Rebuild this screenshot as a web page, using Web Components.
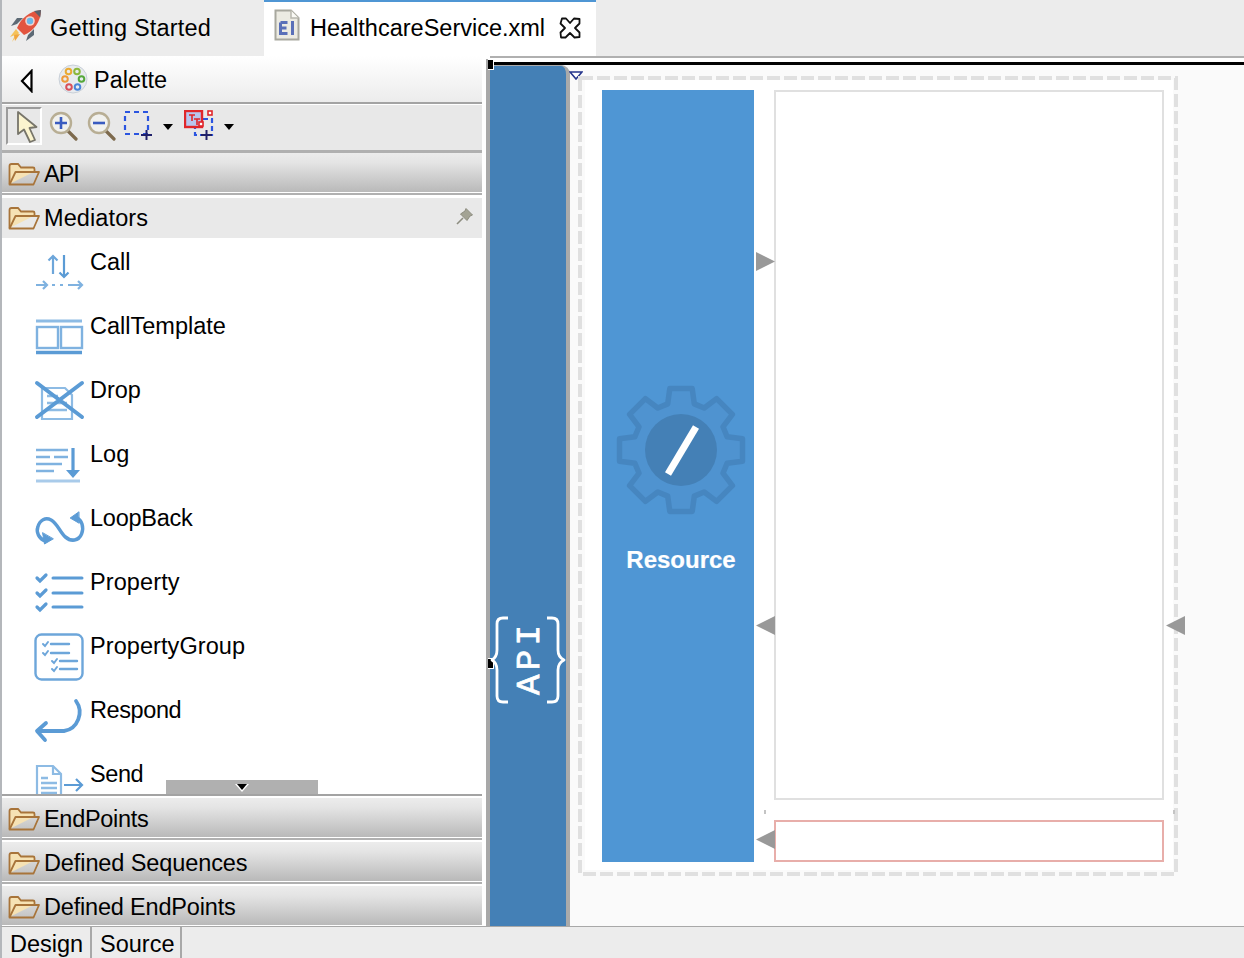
<!doctype html>
<html>
<head>
<meta charset="utf-8">
<title>HealthcareService.xml</title>
<style>
  html, body { margin: 0; padding: 0; background: #ececec; }
  body { font-family: "Liberation Sans", Arial, sans-serif; font-size: 23.5px; color: #000; }
  svg { display: block; overflow: visible; }
</style>
</head>
<body>

<svg width="0" height="0" style="position:absolute">
  <defs>
    <linearGradient id="folderFill" x1="0" y1="0" x2="0" y2="1">
      <stop offset="0" stop-color="#fbe9bd"/>
      <stop offset="1" stop-color="#eec883"/>
    </linearGradient>
  </defs>
</svg>

<ide-window>
  <editor-tabs>
    <editor-tab>
      <svg slot="icon" width="34" height="34" viewBox="0 0 34 34">
        <path d="M10 24 L3 33 L6 26 L1 28 L7 20 Z" fill="#f5c25b"/>
        <path d="M11 25 L6 32 L5 26 Z" fill="#f0a640"/>
        <path d="M8 15 L2 17 L8 9 L14 9 Z" fill="#5d6a75"/>
        <path d="M19 26 L17 32 L25 26 L25 20 Z" fill="#5d6a75"/>
        <path d="M8 19 C12 9 21 2 32 1 C32 12 25 22 15 26 Z" fill="#e2553f"/>
        <path d="M25 2 L32 1 L31.3 8.5 Z" fill="#59626c"/>
        <circle cx="21" cy="12" r="4.8" fill="#f4d3cb"/>
        <circle cx="21" cy="12" r="3.2" fill="#6cb8e8"/>
      </svg>
      Getting Started
    </editor-tab>
    <editor-tab active closable>
      <svg slot="icon" width="26" height="32" viewBox="0 0 26 32">
        <path d="M1.5 1.5 H17 L24.5 9 V30.5 H1.5 Z" fill="#ecebe2" stroke="#a8a89e" stroke-width="2"/>
        <path d="M17 1.5 V9 H24.5" fill="#fafaf5" stroke="#b8b8ae" stroke-width="1.5"/>
        <path d="M6.5 13.5 H13.5 M6.5 13.5 V24.5 H13.5 M6.5 19 H12.5" fill="none" stroke="#5a70b8" stroke-width="3"/>
        <path d="M18.5 12 V26" fill="none" stroke="#5a70b8" stroke-width="3"/>
      </svg>
      HealthcareService.xml
    </editor-tab>
  </editor-tabs>

  <ide-workspace>
    <palette-panel>
      <palette-header>Palette</palette-header>
      <palette-tools></palette-tools>
      <palette-drawer gradient wide style="letter-spacing:-1px">API</palette-drawer>
      <palette-drawer open pinned style="letter-spacing:.1px">Mediators</palette-drawer>
      <mediator-list>
        <mediator-item>
          <svg slot="icon" width="52" height="46" viewBox="0 0 52 46" fill="none" stroke="#6da6da" stroke-width="2.2">
            <path d="M21 26 V8 M16.5 12.5 L21 8 L25.5 12.5"/>
            <path d="M32 7 V29 M27.5 24.5 L32 29 L36.5 24.5" stroke="#5b9bd5"/>
            <path d="M4 37 H15 M11 33 L15 37 L11 41 M20 37 H23 M28 37 H31 M36 37 H50 M46 33 L50 37 L46 41" stroke="#7fb2e0"/>
          </svg>
          Call
        </mediator-item>
        <mediator-item>
          <svg slot="icon" width="52" height="46" viewBox="0 0 52 46" fill="none">
            <path d="M4 9 H50" stroke="#8dbbe4" stroke-width="3"/>
            <rect x="5" y="15" width="21" height="21" stroke="#7fb2e0" stroke-width="2.4"/>
            <rect x="29" y="15" width="21" height="21" stroke="#7fb2e0" stroke-width="2.4"/>
            <path d="M4 40.5 H50" stroke="#5b9bd5" stroke-width="3.4"/>
          </svg>
          CallTemplate
        </mediator-item>
        <mediator-item>
          <svg slot="icon" width="52" height="46" viewBox="0 0 52 46" fill="none">
            <path d="M10 12 H33 L40 19 V43 H10 Z" stroke="#8dbbe4" stroke-width="2.2"/>
            <path d="M15 20 H26 M15 27 H35 M15 34 H35" stroke="#8dbbe4" stroke-width="2.4"/>
            <path d="M5 7 L50 41 M50 7 L5 41" stroke="#5b9bd5" stroke-width="4" stroke-linecap="round"/>
          </svg>
          Drop
        </mediator-item>
        <mediator-item>
          <svg slot="icon" width="52" height="46" viewBox="0 0 52 46" fill="none">
            <path d="M4 10 H36 M4 17 H18 M22 17 H36 M4 24 H30 M4 31 H22" stroke="#7fb2e0" stroke-width="2.4"/>
            <path d="M4 41 H48" stroke="#a9cbea" stroke-width="3"/>
            <path d="M41 8 V36" stroke="#5b9bd5" stroke-width="3.2"/>
            <path d="M34 30 L41 38 L48 30 Z" fill="#5b9bd5"/>
          </svg>
          Log
        </mediator-item>
        <mediator-item style="letter-spacing:-.25px">
          <svg slot="icon" width="52" height="46" viewBox="0 0 52 46" fill="none" stroke="#5b9bd5" stroke-width="3.6" stroke-linecap="round" stroke-linejoin="round">
            <g transform="translate(3 0) scale(.95 1)">
              <path d="M11 37 C4 35 1 28 3 23 C5 16 11 13 17 16 C24 20 26 28 32 33 C38 38 46 37 49 30 C52 23 49 16 44 14"/>
              <path d="M46 8 L37 14 L46 19 Z" fill="#5b9bd5" stroke-width="1"/>
              <path d="M8 29 L10 40 L19 35 Z" fill="#5b9bd5" stroke-width="1"/>
            </g>
          </svg>
          LoopBack
        </mediator-item>
        <mediator-item style="letter-spacing:.1px">
          <svg slot="icon" width="52" height="46" viewBox="0 0 52 46" fill="none" stroke="#5b9bd5" stroke-linecap="round">
            <path d="M5 10 L8 13 L14 7 M5 25 L8 28 L14 22 M5 39 L8 42 L14 36" stroke-width="3.2"/>
            <path d="M21 10 H50 M21 25 H50 M21 39 H50" stroke-width="3"/>
          </svg>
          Property
        </mediator-item>
        <mediator-item style="letter-spacing:.08px">
          <svg slot="icon" width="52" height="50" viewBox="0 0 52 50" fill="none" stroke="#6da6da" stroke-linecap="round">
            <rect x="3.5" y="2.5" width="47" height="45" rx="6" stroke-width="2.4"/>
            <path d="M11 12 L13 14 L16 10 M11 21 L13 23 L16 19 M20 29 L22 31 L25 27 M20 37 L22 39 L25 35" stroke-width="2"/>
            <path d="M19 12 H37 M19 21 H37 M28 29 H45 M28 37 H45" stroke-width="2.4"/>
          </svg>
          PropertyGroup
        </mediator-item>
        <mediator-item style="letter-spacing:-.4px">
          <svg slot="icon" width="52" height="46" viewBox="0 0 52 46" fill="none" stroke="#5b9bd5" stroke-width="3.8" stroke-linecap="round" stroke-linejoin="round">
            <path d="M44 5 C52 16 46 33 32 35 H8"/>
            <path d="M14 27 L5 35 L13 44"/>
          </svg>
          Respond
        </mediator-item>
        <mediator-item style="letter-spacing:-.4px">
          <svg slot="icon" width="52" height="46" viewBox="0 0 52 46" fill="none" stroke="#8dbbe4" stroke-width="2.2">
            <path d="M5 6 H21 L29 14 V42 H5 Z"/>
            <path d="M21 6 V14 H29"/>
            <path d="M9 18 H16 M9 23 H25 M9 28 H25 M9 33 H25" stroke-width="2.4"/>
            <path d="M32 25 H50 M44 19 L50 25 L44 31" stroke="#5b9bd5"/>
          </svg>
          Send
        </mediator-item>
      </mediator-list>
      <palette-drawer gradient spaced style="letter-spacing:-.3px">EndPoints</palette-drawer>
      <palette-drawer gradient style="letter-spacing:-.1px">Defined Sequences</palette-drawer>
      <palette-drawer gradient last style="letter-spacing:-.18px">Defined EndPoints</palette-drawer>
    </palette-panel>
    <design-canvas></design-canvas>
  </ide-workspace>

  <page-tabs></page-tabs>
</ide-window>

<script>
  const folderIcon = `
    <svg width="32" height="24" viewBox="0 0 32 24" style="display:block;flex:none">
      <path d="M1.5 22 V4 Q1.5 2 3.5 2 H10 L13 5.5 H25 Q26.5 5.5 26.5 7 V9.5" fill="#f6e2b4" stroke="#a8743a" stroke-width="1.8"/>
      <path d="M1.5 22.5 L7.5 10 H31 L25.5 22.5 Z" fill="url(#folderFill)" stroke="#a8743a" stroke-width="1.8" stroke-linejoin="round"/>
    </svg>`;

  class IdeWindow extends HTMLElement {
    constructor() {
      super();
      this.attachShadow({ mode: "open" }).innerHTML = `
        <style>
          :host { display: flex; flex-direction: column; width: 1244px; height: 958px; overflow: hidden; }
        </style>
        <slot></slot>`;
    }
  }

  class EditorTabs extends HTMLElement {
    constructor() {
      super();
      this.attachShadow({ mode: "open" }).innerHTML = `
        <style>
          :host { display: flex; height: 56px; flex: none; background: #ececec; border-left: 2px solid #b4b7bb; box-sizing: border-box; }
        </style>
        <slot></slot>`;
    }
  }

  class EditorTab extends HTMLElement {
    constructor() {
      super();
      const active = this.hasAttribute("active");
      this.attachShadow({ mode: "open" }).innerHTML = `
        <style>
          :host { display: flex; align-items: center; box-sizing: border-box; height: 56px;
                  width: ${active ? 332 : 262}px; padding-left: ${active ? 10 : 7}px; padding-bottom: ${active ? 2 : 1}px;
                  background: ${active ? "#fff" : "#ececec"};
                  border-top: 2px solid ${active ? "#4f96d4" : "#ececec"};
                  letter-spacing: ${active ? 0 : 0.2}px; }
          .icon { width: ${active ? 36 : 41}px; flex: none; margin-bottom: 6px; }
          .close { margin-left: 14px; display: block; }
        </style>
        <span class="icon"><slot name="icon"></slot></span>
        <slot></slot>
        ${this.hasAttribute("closable") ? `
          <svg class="close" width="22" height="22" viewBox="0 0 22 22">
            <path d="M3 1.5 L7 1.5 L11 6 L15 1.5 L20.5 2 L20.5 6.5 L16 11 L20.5 15.5 L20.5 20 L15.5 20.5 L11 16 L6.5 20.5 L2 20.5 L1.5 15.5 L6 11 L1.5 6.5 Z"
                  fill="#fff" stroke="#111" stroke-width="1.8" stroke-linejoin="round"/>
          </svg>` : ""}`;
    }
  }

  class IdeWorkspace extends HTMLElement {
    constructor() {
      super();
      this.attachShadow({ mode: "open" }).innerHTML = `
        <style>
          :host { display: flex; flex: none; height: 870px; background: #fff; }
        </style>
        <slot></slot>`;
    }
  }

  class PalettePanel extends HTMLElement {
    constructor() {
      super();
      this.attachShadow({ mode: "open" }).innerHTML = `
        <style>
          :host { display: flex; flex-direction: column; flex: none; width: 482px; box-sizing: border-box;
                  border-left: 2px solid #b4b7bb; background: #fff; }
        </style>
        <slot></slot>`;
    }
  }

  class PaletteHeader extends HTMLElement {
    constructor() {
      super();
      this.attachShadow({ mode: "open" }).innerHTML = `
        <style>
          :host { display: flex; align-items: center; flex: none; box-sizing: border-box; height: 48px;
                  padding: 3px 0 0 18px; background: linear-gradient(#fff, #ececec); border-bottom: 2px solid #a3a3a3; }
          svg { display: block; flex: none; }
          .label { margin-left: 6px; }
          .back { margin-right: 24px; }
          .wheel { margin-top: -3px; }
        </style>
        <svg class="back" width="14" height="24" viewBox="0 0 14 24">
          <path d="M11.5 2 L2 12 L11.5 22 Z" fill="#fff" stroke="#000" stroke-width="2.2"/>
        </svg>
        <svg class="wheel" width="30" height="30" viewBox="0 0 30 30">
          <circle cx="15" cy="15" r="14" fill="#e8ebef" stroke="#c9d0d8"/>
          <circle cx="10.5" cy="7.5" r="2.8" fill="none" stroke="#eaaa33" stroke-width="2"/>
          <circle cx="19" cy="7.5" r="2.8" fill="none" stroke="#8cb83c" stroke-width="2"/>
          <circle cx="7" cy="15" r="2.8" fill="none" stroke="#ee9a3a" stroke-width="2"/>
          <circle cx="23.5" cy="15" r="2.8" fill="none" stroke="#55a83a" stroke-width="2"/>
          <circle cx="11" cy="23" r="2.8" fill="none" stroke="#d8505a" stroke-width="2"/>
          <circle cx="19.5" cy="23" r="2.8" fill="none" stroke="#4a86d8" stroke-width="2"/>
        </svg>
        <span class="label"><slot></slot></span>`;
    }
  }

  class PaletteTools extends HTMLElement {
    constructor() {
      super();
      const lens = (sign) => `
        <svg class="tool" width="30" height="30" viewBox="0 0 30 30">
          <path d="M17 18 L27 28" stroke="#7d6a4d" stroke-width="3.2" stroke-linecap="round"/>
          <circle cx="12" cy="12" r="10" fill="#f1f1ee" stroke="#b8ae94" stroke-width="2.4"/>
          <path d="${sign}" stroke="#3a5cc0" stroke-width="2.6"/>
        </svg>`;
      const caret = `<svg class="caret" width="10" height="6" viewBox="0 0 10 6"><path d="M0 0 H10 L5 6 Z" fill="#000"/></svg>`;
      this.attachShadow({ mode: "open" }).innerHTML = `
        <style>
          :host { display: flex; align-items: center; flex: none; box-sizing: border-box; height: 48px;
                  margin-top: 1px; padding: 0 0 3px 4px; background: #e8e8e8; border-bottom: 3px solid #b0b0b0; }
          svg { display: block; }
          .picked { box-sizing: border-box; width: 36px; height: 38px; padding: 2px 0 0 9px;
                    border: 2px solid; border-color: #9c9c9c #fff #fff #9c9c9c; }
          .tool { flex: none; }
          .zoom-in { margin-left: 7px; }
          .zoom-out { margin-left: 8px; }
          .marquee { margin-left: 6px; margin-top: -2px; }
          .caret { margin-left: 10px; margin-top: 1px; flex: none; }
          .note { margin-left: 11px; margin-top: -2px; }
          .caret.second { margin-left: 8px; }
        </style>
        <div class="picked">
          <svg width="22" height="32" viewBox="0 0 22 32">
            <path d="M1 1 L1 23 L7 18.5 L13 31 L18 29 L12.5 17 L19.5 16 Z" fill="#fbf4cf" stroke="#77756a" stroke-width="1.8" stroke-linejoin="round"/>
          </svg>
        </div>
        <span class="zoom-in">${lens("M6 12 H18 M12 6 V18")}</span>
        <span class="zoom-out">${lens("M6 12 H18")}</span>
        <svg class="marquee tool" width="30" height="30" viewBox="0 0 30 30">
          <rect x="2" y="2" width="23" height="22" fill="none" stroke="#2b55e0" stroke-width="2.2" stroke-dasharray="5 4"/>
          <path d="M18 25 H29 M23.5 20 V30" stroke="#20206a" stroke-width="2"/>
        </svg>
        ${caret}
        <svg class="note tool" width="32" height="30" viewBox="0 0 32 30">
          <rect x="11" y="9" width="17" height="16" fill="none" stroke="#2b55e0" stroke-width="2.2" stroke-dasharray="5 3"/>
          <rect x="1" y="1" width="17" height="16" fill="#b9c6ee" stroke="#e0262a" stroke-width="2.4"/>
          <path d="M5 5 H11 M8 5 V11 M10 9 H16 M13 9 V15" stroke="#e0262a" stroke-width="1.6"/>
          <rect x="24" y="1" width="4" height="4" fill="#fff" stroke="#e0262a" stroke-width="1.6"/>
          <rect x="15" y="12" width="4" height="4" fill="#fff" stroke="#e0262a" stroke-width="1.6"/>
          <path d="M17 25 H28 M22.5 20 V30" stroke="#20206a" stroke-width="2"/>
        </svg>
        <svg class="caret second" width="10" height="6" viewBox="0 0 10 6"><path d="M0 0 H10 L5 6 Z" fill="#000"/></svg>`;
    }
  }

  class PaletteDrawer extends HTMLElement {
    constructor() {
      super();
      const open = this.hasAttribute("open");
      const gradient = this.hasAttribute("gradient");
      const last = this.hasAttribute("last");
      const below = this.hasAttribute("wide") ? 3 : 2;
      this.attachShadow({ mode: "open" }).innerHTML = `
        <style>
          :host { display: block; flex: none; }
          .head { display: flex; align-items: center; box-sizing: border-box; height: ${open ? 40 : 39}px;
                  padding: ${gradient ? 3 : 0}px 8px 0 6px;
                  margin-top: ${this.hasAttribute("spaced") ? 2 : 0}px;
                  background: ${gradient ? "linear-gradient(#ececec, #e4e4e4 25%, #b9b9b9)" : "#e9e9e9"}; }
          .label { margin-left: 4px; flex: 1; }
          .sep { height: 2px; margin: 1px 0 ${below}px; background: #b0b0b0; }
          .tail { height: 1px; background: #fff; }
          .pin { display: block; margin-bottom: 4px; }
        </style>
        <div class="head">
          ${folderIcon}
          <span class="label"><slot></slot></span>
          ${this.hasAttribute("pinned") ? `
            <svg class="pin" width="18" height="18" viewBox="0 0 18 18">
              <path d="M1 17 L7 11" stroke="#8d8d80" stroke-width="1.6"/>
              <path d="M10 1.5 L16.5 8 L14 9 L11 13.5 L4.5 7 L9 4 Z" fill="#a3a394" stroke="#8d8d80"/>
            </svg>` : ""}
        </div>
        ${open ? "" : last ? `<div class="tail"></div>` : `<div class="sep"></div>`}`;
    }
  }

  class MediatorList extends HTMLElement {
    constructor() {
      super();
      this.attachShadow({ mode: "open" }).innerHTML = `
        <style>
          :host { display: block; position: relative; flex: none; box-sizing: content-box; height: 556px; overflow: hidden;
                  border-bottom: 2px solid #a3a3a3; background: #fff; }
          .more { position: absolute; left: 164px; top: 542px; width: 152px; height: 14px; background: #b0b0b0; }
          .more svg { display: block; margin: 3px 0 0 69px; }
        </style>
        <slot></slot>
        <div class="more">
          <svg width="14" height="9" viewBox="0 0 14 9">
            <path d="M0 1 H14 L7 9 Z" fill="#fff"/>
            <path d="M2 1 H12 L7 7 Z" fill="#000"/>
          </svg>
        </div>`;
    }
  }

  class MediatorItem extends HTMLElement {
    constructor() {
      super();
      this.attachShadow({ mode: "open" }).innerHTML = `
        <style>
          :host { display: flex; box-sizing: border-box; height: 64px; padding: 10px 0 0 30px; }
          .icon { width: 58px; flex: none; }
          .label { line-height: 28px; }
        </style>
        <span class="icon"><slot name="icon"></slot></span>
        <span class="label"><slot></slot></span>`;
    }
  }

  class DesignCanvas extends HTMLElement {
    constructor() {
      super();
      // coordinates in here are canvas ones: the diagram is placed freely
      const tip = (x, y, dir) => `<span class="tip" style="left:${x}px;top:${y}px;transform:scaleX(${dir})"></span>`;
      let gear = "";
      const cx = 91, cy = 66;
      for (let i = 0; i < 8; i++) {
        const a = (i * 45 - 90) * Math.PI / 180;
        const pt = (r, off) => {
          const t = a + off;
          return (cx + r * Math.cos(t)).toFixed(1) + " " + (cy + r * Math.sin(t)).toFixed(1);
        };
        gear += (i ? " L" : "M") + pt(48, -0.28) + " L" + pt(62.5, -0.18) + " L" + pt(62.5, 0.18) + " L" + pt(48, 0.28);
      }
      this.attachShadow({ mode: "open" }).innerHTML = `
        <style>
          :host { display: block; position: relative; flex: 1; background: #fff; overflow: hidden; }
          svg { display: block; }
          .sheet { position: absolute; left: 4px; top: 3px; right: 0; bottom: 0; background: #fafafa;
                   border-left: 4px solid #a8a8a8; box-sizing: border-box; }
          .ruler-top { position: absolute; left: 8px; right: 0; top: 0; background: #fff; border-top: 2px solid #b0b0b0; border-bottom: 3px solid #000; height: 4px; }
          .rail { position: absolute; left: 8px; top: 9px; width: 76px; height: 861px; box-sizing: content-box;
                  background: #4480b6; border: 2px solid #aaa; border-width: 1px 4px 0 0; border-top-right-radius: 9px; }
          .handle { position: absolute; left: 6px; width: 5px; height: 9px; background: #000; border: 1px solid #fff; border-width: 1px 1px 1px 0; }
          .frame { position: absolute; left: 96px; top: 20px; width: 600px; height: 800px; }
          .inner { position: absolute; left: 103px; top: 24px; width: 588px; height: 790px; background: #fff; }
          .resource { position: absolute; left: 120px; top: 34px; width: 152px; height: 772px; background: #4f96d4;
                      display: flex; flex-direction: column; align-items: center; color: #fff; }
          .resource svg { margin: 294px 0 0 6px; }
          .resource b { margin: 30px 0 0 6px; font: bold 24px "Liberation Sans", Arial, sans-serif; line-height: 28px; -webkit-text-stroke: .2px #fff; }
          .inseq { position: absolute; left: 292px; top: 34px; width: 390px; height: 710px; box-sizing: border-box; background: #fff; border: 2px solid #e0e0e0; }
          .fault { position: absolute; left: 292px; top: 764px; width: 390px; height: 42px; box-sizing: border-box; background: #fff; border: 2px solid #e8aeaa; }
          .tip { position: absolute; width: 19px; height: 19px; background: #999; clip-path: polygon(0 0, 100% 50%, 0 100%); }
          .tick { position: absolute; top: 754px; width: 2px; height: 4px; background: #c4c4c4; }
          .api { position: absolute; left: 4px; top: 559px; }
          .api text { font: 34px "Liberation Mono", monospace; fill: #fff; stroke: #fff; stroke-width: .8px; letter-spacing: 4.4px; }
          .nav { position: absolute; left: 87px; top: 15px; }
        </style>
        <div class="sheet"></div>
        <div class="ruler-top"></div>
        <div class="rail"></div>
        <span class="handle" style="top:3px"></span>
        <span class="handle" style="top:602px"></span>
        <svg class="api" width="80" height="92" viewBox="0 0 80 92">
          <path d="M22 3 H17 Q11 3 11 9 V35 Q11 42 6 45 Q11 48 11 55 V81 Q11 87 17 87 H22" fill="none" stroke="#fff" stroke-width="2.8" stroke-linejoin="round"/>
          <path d="M61 3 H66 Q72 3 72 9 V35 Q72 42 78 45 Q72 48 72 55 V81 Q72 87 66 87 H61" fill="none" stroke="#fff" stroke-width="2.8" stroke-linejoin="round"/>
          <text transform="translate(52.5 80) rotate(-90)">API</text>
        </svg>
        <svg class="nav" width="14" height="9" viewBox="0 0 14 9">
          <path d="M1 1 H13 L7 8 Z" fill="#fff" stroke="#25358c" stroke-width="1.6"/>
        </svg>
        <svg class="frame" viewBox="0 0 600 800" fill="none">
          <rect x="2" y="2" width="596" height="796" stroke="#e0e0e0" stroke-width="4" stroke-dasharray="13 4"/>
        </svg>
        <div class="inner"></div>
        <div class="resource">
          <svg width="132" height="132" viewBox="25 0 132 132">
            <path d="${gear} Z" fill="#4f93d0" stroke="#4686c0" stroke-width="5.5" stroke-linejoin="round"/>
            <circle cx="91" cy="66" r="36" fill="#4480b6"/>
            <path d="M78 90 L106 43" stroke="#fff" stroke-width="7"/>
          </svg>
          <b>Resource</b>
        </div>
        <div class="inseq"></div>
        <div class="fault"></div>
        <span class="tick" style="left:282px"></span>
        <span class="tick" style="left:691px"></span>
        ${tip(274, 196, 1)}${tip(274, 560, -1)}${tip(684, 560, -1)}${tip(274, 774, -1)}`;
    }
  }

  class PageTabs extends HTMLElement {
    constructor() {
      super();
      this.attachShadow({ mode: "open" }).innerHTML = `
        <style>
          :host { display: flex; flex: none; box-sizing: border-box; height: 32px; background: #ececec; border-top: 1px solid #a8a8a8; border-left: 2px solid #b4b7bb; }
          div { display: flex; align-items: center; box-sizing: border-box; padding: 3px 0 0 8px; height: 31px; width: 88px; }
          .source { width: 92px; padding-left: 8px; border: 2px solid #a8a8a8; border-width: 0 2px; }
        </style>
        <div>Design</div>
        <div class="source">Source</div>`;
    }
  }

  customElements.define("ide-window", IdeWindow);
  customElements.define("editor-tabs", EditorTabs);
  customElements.define("editor-tab", EditorTab);
  customElements.define("ide-workspace", IdeWorkspace);
  customElements.define("palette-panel", PalettePanel);
  customElements.define("palette-header", PaletteHeader);
  customElements.define("palette-tools", PaletteTools);
  customElements.define("palette-drawer", PaletteDrawer);
  customElements.define("mediator-list", MediatorList);
  customElements.define("mediator-item", MediatorItem);
  customElements.define("design-canvas", DesignCanvas);
  customElements.define("page-tabs", PageTabs);
</script>
</body>
</html>
